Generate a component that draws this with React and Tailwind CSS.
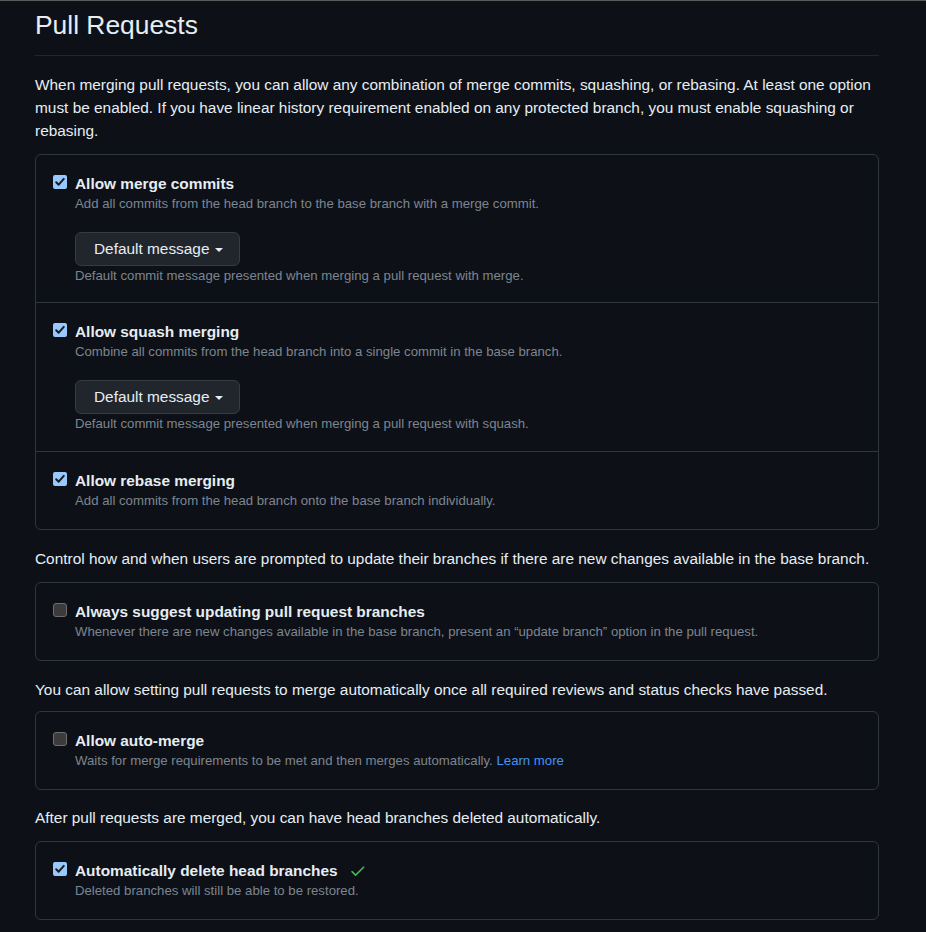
function Checkbox({ checked }) {
    if (checked) {
        return (
            <span className="mt-[2px] flex h-[14px] w-[14px] shrink-0 items-center justify-center rounded-[2px] bg-[#99c8ff]">
                <svg width="12" height="12" viewBox="0 0 12 12" fill="none">
                    <path d="M2.2 6.2 L4.7 8.7 L9.8 2.9" stroke="#1b1b1b" strokeWidth="2" strokeLinecap="round" strokeLinejoin="round" />
                </svg>
            </span>
        );
    }
    return (
        <span className="mt-[2px] block h-[14px] w-[14px] shrink-0 rounded-[3px] border border-[#6e6e6e] bg-[#3b3b3b]"></span>
    );
}

function DefaultMessage() {
    return (
        <button
            type="button"
            className="mt-[19px] flex h-[34px] items-center gap-[5px] rounded-md border border-[#363b42] bg-[#21262d] pl-[18px] pr-4 text-[15.4px] text-[#e6edf3]"
        >
            Default message
            <svg width="8" height="4" viewBox="0 0 8 4" className="mt-[1px]">
                <path d="M0 0 L8 0 L4 4 Z" fill="#e6edf3" />
            </svg>
        </button>
    );
}

function OptionRow({ checked, title, description, extra, withButton, note, last, tall }) {
    const pb = withButton ? (tall ? 'pb-[18px]' : 'pb-[17px]') : 'pb-[19px]';
    return (
        <div className={`flex gap-2 pl-[17px] pr-4 pt-[18px] ${pb} ${last ? '' : 'border-b border-[#30363d]'}`}>
            <Checkbox checked={checked} />
            <div className="min-w-0">
                <div className="flex items-center gap-[11px] text-[15.4px] font-bold leading-[22px] text-[#e6edf3]">
                    {title}
                    {extra}
                </div>
                <p className="text-[13.2px] leading-[18px] text-[#7d8590]">{description}</p>
                {withButton && (
                    <>
                        <DefaultMessage />
                        <p className="mt-[1px] text-[13.2px] leading-[18px] text-[#7d8590]">{note}</p>
                    </>
                )}
            </div>
        </div>
    );
}

function Box({ children }) {
    return <div className="rounded-md border border-[#30363d]">{children}</div>;
}

export default function App() {
    return (
        <div className="min-h-[932px] border-t border-[#5a5a5a] bg-[#0d1117] font-['Liberation_Sans',Arial,sans-serif] text-[#e6edf3]">
            <div className="ml-[35px] w-[844px]">
                <div className="border-b border-[#21262d] pb-[12px] pt-[6px]">
                    <h2 className="text-[26.4px] font-normal leading-[36px]">Pull Requests</h2>
                </div>

                <p className="mb-3 mt-[17px] text-[15.4px] leading-[23px]">
                    When merging pull requests, you can allow any combination of merge commits, squashing, or rebasing. At least one option must be enabled. If you have linear history requirement enabled on any protected branch, you must enable squashing or rebasing.
                </p>

                <Box>
                    <OptionRow
                        checked
                        title="Allow merge commits"
                        description="Add all commits from the head branch to the base branch with a merge commit."
                        withButton
                        note="Default commit message presented when merging a pull request with merge."
                    />
                    <OptionRow
                        checked
                        tall
                        title="Allow squash merging"
                        description="Combine all commits from the head branch into a single commit in the base branch."
                        withButton
                        note="Default commit message presented when merging a pull request with squash."
                    />
                    <OptionRow
                        checked
                        title="Allow rebase merging"
                        description="Add all commits from the head branch onto the base branch individually."
                        last
                    />
                </Box>

                <p className="mb-3 mt-[17px] text-[15.4px] leading-[23px]">
                    Control how and when users are prompted to update their branches if there are new changes available in the base branch.
                </p>
                <Box>
                    <OptionRow
                        title="Always suggest updating pull request branches"
                        description="Whenever there are new changes available in the base branch, present an “update branch” option in the pull request."
                        last
                    />
                </Box>

                <p className="mb-[10px] mt-[17px] text-[15.4px] leading-[23px]">
                    You can allow setting pull requests to merge automatically once all required reviews and status checks have passed.
                </p>
                <Box>
                    <OptionRow
                        title="Allow auto-merge"
                        description={
                            <>
                                Waits for merge requirements to be met and then merges automatically.{' '}
                                <a href="#" className="text-[#4493f8]">Learn more</a>
                            </>
                        }
                        last
                    />
                </Box>

                <p className="mb-3 mt-4 text-[15.4px] leading-[23px]">
                    After pull requests are merged, you can have head branches deleted automatically.
                </p>
                <Box>
                    <OptionRow
                        checked
                        title="Automatically delete head branches"
                        description="Deleted branches will still be able to be restored."
                        extra={
                            <svg width="17.6" height="17.6" viewBox="0 0 16 16" fill="#3fb950">
                                <path d="M13.78 4.22a.75.75 0 0 1 0 1.06l-7.25 7.25a.75.75 0 0 1-1.06 0L2.22 9.28a.751.751 0 0 1 .018-1.042.751.751 0 0 1 1.042-.018L6 10.94l6.72-6.72a.75.75 0 0 1 1.06 0Z" />
                            </svg>
                        }
                        last
                    />
                </Box>
            </div>
        </div>
    );
}
